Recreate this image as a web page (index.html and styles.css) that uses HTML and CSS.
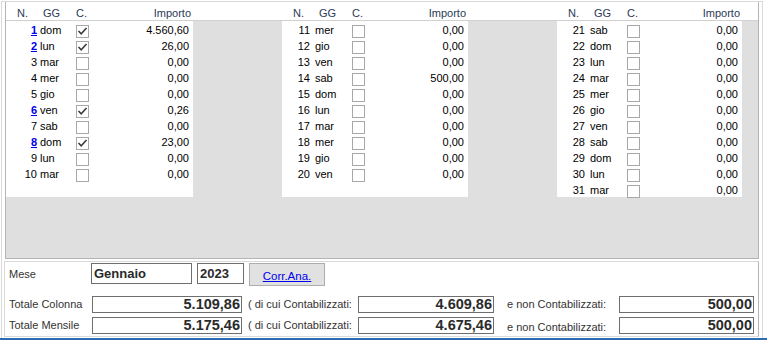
FILE: index.html
```html
<!DOCTYPE html>
<html lang="it">
<head>
    <meta charset="UTF-8">
    <meta name="viewport" content="width=device-width, initial-scale=1.0">
    <title>Corrispettivi mensili</title>
    <link rel="stylesheet" href="styles.css">
</head>
<body>

<div class="window">
    <div class="panel">
        <div class="col col-first">
            <div class="col-head"><span>N.</span><span>GG</span><span>C.</span><span class="imp">Importo</span></div>
            <div class="col-body">
                <div class="day"><span class="n"><a class="lnk">1</a></span><span class="gg">dom</span><span class="chk on"><svg viewBox="0 0 11 11"><polyline points="1.5,5 4.2,7.8 9.5,2"/></svg></span><span class="imp">4.560,60</span></div>
                <div class="day"><span class="n"><a class="lnk">2</a></span><span class="gg">lun</span><span class="chk on"><svg viewBox="0 0 11 11"><polyline points="1.5,5 4.2,7.8 9.5,2"/></svg></span><span class="imp">26,00</span></div>
                <div class="day"><span class="n">3</span><span class="gg">mar</span><span class="chk"></span><span class="imp">0,00</span></div>
                <div class="day"><span class="n">4</span><span class="gg">mer</span><span class="chk"></span><span class="imp">0,00</span></div>
                <div class="day"><span class="n">5</span><span class="gg">gio</span><span class="chk"></span><span class="imp">0,00</span></div>
                <div class="day"><span class="n"><a class="lnk">6</a></span><span class="gg">ven</span><span class="chk on"><svg viewBox="0 0 11 11"><polyline points="1.5,5 4.2,7.8 9.5,2"/></svg></span><span class="imp">0,26</span></div>
                <div class="day"><span class="n">7</span><span class="gg">sab</span><span class="chk"></span><span class="imp">0,00</span></div>
                <div class="day"><span class="n"><a class="lnk">8</a></span><span class="gg">dom</span><span class="chk on"><svg viewBox="0 0 11 11"><polyline points="1.5,5 4.2,7.8 9.5,2"/></svg></span><span class="imp">23,00</span></div>
                <div class="day"><span class="n">9</span><span class="gg">lun</span><span class="chk"></span><span class="imp">0,00</span></div>
                <div class="day"><span class="n">10</span><span class="gg">mar</span><span class="chk"></span><span class="imp">0,00</span></div>
            </div>
        </div>
        <div class="col">
            <div class="col-head"><span>N.</span><span>GG</span><span>C.</span><span class="imp">Importo</span></div>
            <div class="col-body">
                <div class="day"><span class="n">11</span><span class="gg">mer</span><span class="chk"></span><span class="imp">0,00</span></div>
                <div class="day"><span class="n">12</span><span class="gg">gio</span><span class="chk"></span><span class="imp">0,00</span></div>
                <div class="day"><span class="n">13</span><span class="gg">ven</span><span class="chk"></span><span class="imp">0,00</span></div>
                <div class="day"><span class="n">14</span><span class="gg">sab</span><span class="chk"></span><span class="imp">500,00</span></div>
                <div class="day"><span class="n">15</span><span class="gg">dom</span><span class="chk"></span><span class="imp">0,00</span></div>
                <div class="day"><span class="n">16</span><span class="gg">lun</span><span class="chk"></span><span class="imp">0,00</span></div>
                <div class="day"><span class="n">17</span><span class="gg">mar</span><span class="chk"></span><span class="imp">0,00</span></div>
                <div class="day"><span class="n">18</span><span class="gg">mer</span><span class="chk"></span><span class="imp">0,00</span></div>
                <div class="day"><span class="n">19</span><span class="gg">gio</span><span class="chk"></span><span class="imp">0,00</span></div>
                <div class="day"><span class="n">20</span><span class="gg">ven</span><span class="chk"></span><span class="imp">0,00</span></div>
            </div>
        </div>
        <div class="col">
            <div class="col-head"><span>N.</span><span>GG</span><span>C.</span><span class="imp">Importo</span></div>
            <div class="col-body">
                <div class="day"><span class="n">21</span><span class="gg">sab</span><span class="chk"></span><span class="imp">0,00</span></div>
                <div class="day"><span class="n">22</span><span class="gg">dom</span><span class="chk"></span><span class="imp">0,00</span></div>
                <div class="day"><span class="n">23</span><span class="gg">lun</span><span class="chk"></span><span class="imp">0,00</span></div>
                <div class="day"><span class="n">24</span><span class="gg">mar</span><span class="chk"></span><span class="imp">0,00</span></div>
                <div class="day"><span class="n">25</span><span class="gg">mer</span><span class="chk"></span><span class="imp">0,00</span></div>
                <div class="day"><span class="n">26</span><span class="gg">gio</span><span class="chk"></span><span class="imp">0,00</span></div>
                <div class="day"><span class="n">27</span><span class="gg">ven</span><span class="chk"></span><span class="imp">0,00</span></div>
                <div class="day"><span class="n">28</span><span class="gg">sab</span><span class="chk"></span><span class="imp">0,00</span></div>
                <div class="day"><span class="n">29</span><span class="gg">dom</span><span class="chk"></span><span class="imp">0,00</span></div>
                <div class="day"><span class="n">30</span><span class="gg">lun</span><span class="chk"></span><span class="imp">0,00</span></div>
                <div class="day"><span class="n">31</span><span class="gg">mar</span><span class="chk"></span><span class="imp">0,00</span></div>
            </div>
        </div>
    </div>

    <div class="form">
        <div class="form-row row-mese">
            <span class="lbl">Mese</span>
            <span class="box box-mese">Gennaio</span>
            <span class="box box-anno">2023</span>
            <button class="btn-corr"><a class="lnk-corr">Corr.Ana.</a></button>
        </div>
        <div class="form-row row-tot">
            <span class="lbl lbl-tot">Totale Colonna</span>
            <span class="box box-num box-tot">5.109,86</span>
            <span class="txt txt-dicui">( di cui Contabilizzati:</span>
            <span class="box box-num box-cont">4.609,86</span>
            <span class="txt txt-non">e non Contabilizzati:</span>
            <span class="box box-num box-noncont">500,00</span>
        </div>
        <div class="form-row row-tot row-last">
            <span class="lbl lbl-tot">Totale Mensile</span>
            <span class="box box-num box-tot">5.175,46</span>
            <span class="txt txt-dicui">( di cui Contabilizzati:</span>
            <span class="box box-num box-cont">4.675,46</span>
            <span class="txt txt-non low">e non Contabilizzati:</span>
            <span class="box box-num box-noncont">500,00</span>
        </div>
    </div>
</div>
<div class="taskbar"></div>

</body>
</html>
```

FILE: styles.css
```css
body{
    margin:0;
    font-family: "Liberation Sans", Arial, sans-serif;
    font-size:11px;
    color:#000;
    background:#fff;
}
/* cornice esterna */
.window{
    margin:1px 0 0 1px;
    width:762px;
    height:337px;
    box-sizing:border-box;
    border:solid 1px #d9d9d9;
    border-bottom:0;
    padding:0 0 0 2px;
}
/* griglia dei giorni */
.panel{
    margin-left:1px;
    width:754px;
    height:257px;
    box-sizing:border-box;
    border:solid 1px #b4b4b4;
    border-top:0;
    background:linear-gradient(#fff 0 18px, #d0d0d0 18px 19px, #dfdfdf 19px);
    display:grid;
    grid-template-columns:187px 186px 185px;
    column-gap:89px;
    align-items:start;
}
.col-head{
    height:19px;
    box-sizing:border-box;
    padding:4px 2px 0 11px;
    line-height:14px;
    color:#2b3a55;
    display:grid;
    grid-template-columns:26px 33px auto 1fr;
}
.col-head .imp{
    text-align:right;
}
.col-body{
    background:#fff;
    height:176px;
}
.day{
    height:16px;
    box-sizing:border-box;
    padding-top:2px;
    line-height:14px;
    display:grid;
    grid-template-columns:28px 42px 13px 1fr;
}
.col-first .day{
    grid-template-columns:31px 39px 13px 1fr;
}
.day .n{
    text-align:right;
}
.day .gg{
    padding-left:5px;
}
.col-first .day .gg{
    padding-left:3px;
}
.day .imp{
    text-align:right;
    padding-right:4px;
}
.chk{
    width:13px;
    height:13px;
    box-sizing:border-box;
    border:solid 1px #a8a8a8;
    background:#fff;
    margin-top:2px;
}
.chk svg{
    display:block;
    width:11px;
    height:11px;
}
.chk polyline{
    fill:none;
    stroke:#3c3c3c;
    stroke-width:1.6;
}
.lnk{
    color:#0000ee;
    font-weight:700;
    text-decoration:underline;
}
/* parte bassa */
.form{
    margin-top:2px;
    width:755px;
    height:76px;
    box-sizing:border-box;
    border:solid 1px #d9d9d9;
    border-right-color:#b4b4b4;
    padding:1px 0 0 4px;
}
.form-row{
    display:flex;
    align-items:flex-start;
}
.form-row > *{
    flex-shrink:0;
}
.row-mese{
    height:23px;
}
.row-tot{
    height:17px;
    margin-top:10px;
}
.row-last{
    margin-top:4px;
}
.lbl{
    width:82px;
    line-height:22px;
    color:#333;
}
.lbl-tot{
    width:83px;
    line-height:17px;
}
.box{
    box-sizing:border-box;
    border:solid 1px #6e6e6e;
    background:#fff;
    font-weight:700;
    color:#2a2a2a;
}
.box-mese,
.box-anno{
    height:21px;
    font-size:13px;
    line-height:19px;
    padding:0 2px;
}
.box-mese{
    width:101px;
}
.box-anno{
    width:47px;
    margin-left:5px;
}
.btn-corr{
    margin-left:5px;
    width:76px;
    height:23px;
    border:solid 1px #adadad;
    background:#e1e1e1;
    padding:3px 0 0 0;
    font-family:inherit;
    font-size:11.5px;
}
.lnk-corr{
    color:#0000ee;
    text-decoration:underline;
}
.box-num{
    height:17px;
    font-size:14.5px;
    line-height:15px;
    text-align:right;
    padding-right:1px;
}
.box-tot{
    width:150px;
}
.txt{
    line-height:17px;
    color:#333;
    box-sizing:border-box;
}
.txt-dicui{
    width:116px;
    padding-left:6px;
}
.box-cont{
    width:136px;
}
.txt-non{
    width:125px;
    padding-left:13px;
}
.low{
    padding-top:2px;
}
.box-noncont{
    width:135px;
}
.taskbar{
    height:2px;
    background:#2b6cb3;
}
```
